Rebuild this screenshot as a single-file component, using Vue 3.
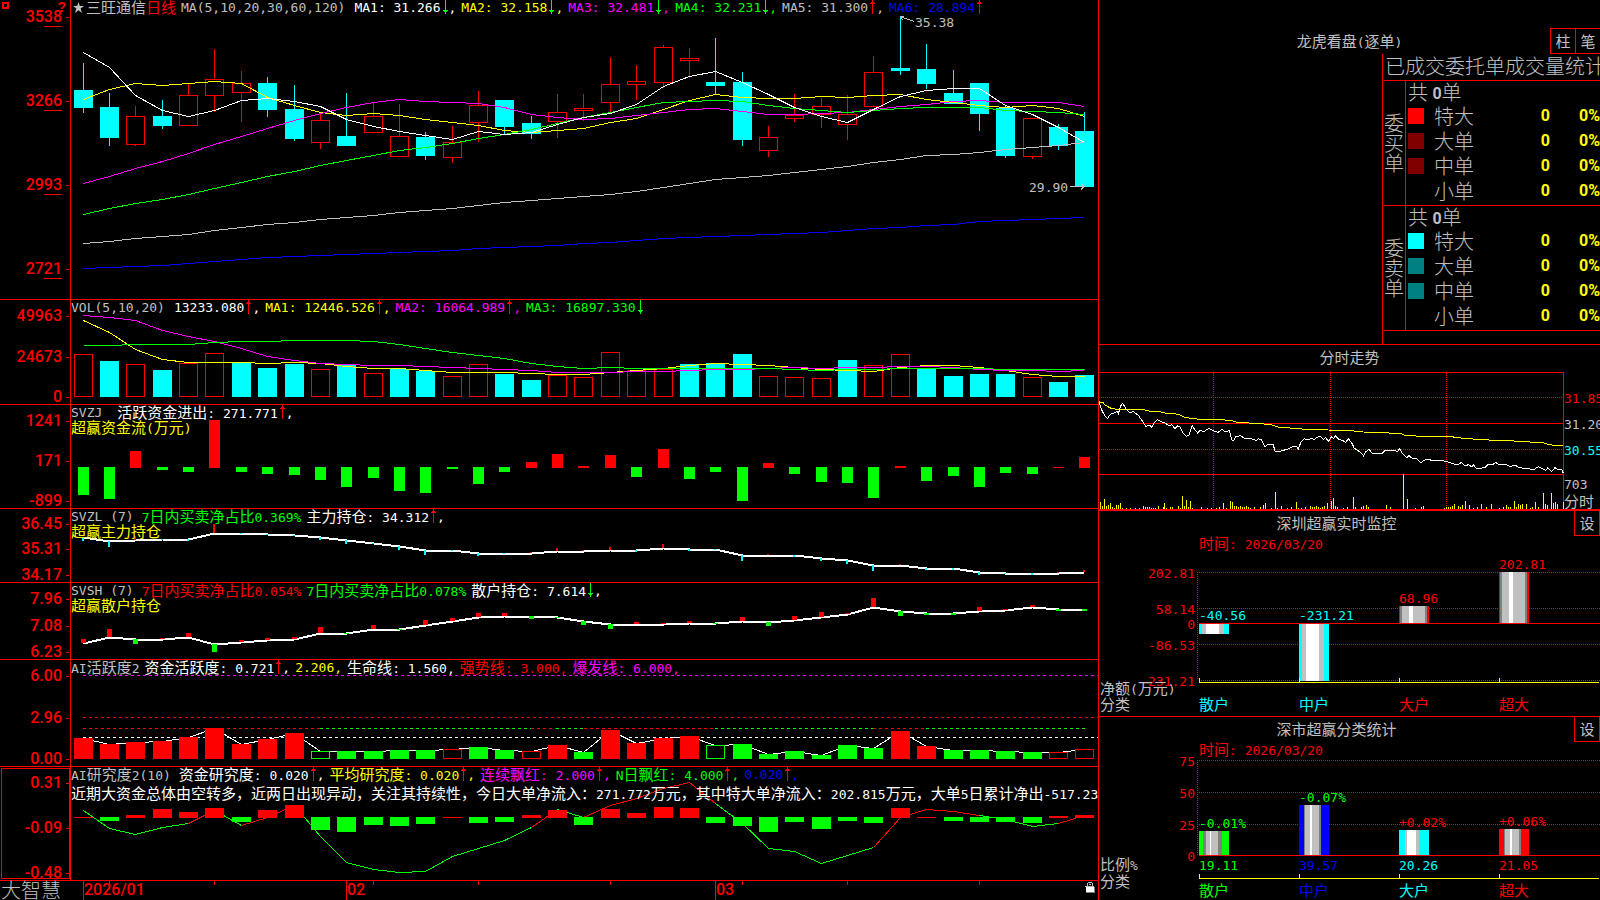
<script setup>
import { h } from 'vue'

const RED = '#ff0000'
const GREEN = '#00ff00'
const CYAN = '#00ffff'
const YELLOW = '#ffff00'
const MAGENTA = '#ff00ff'
const BLUE = '#0000ff'
const WHITE = '#ffffff'
const GRAY = '#c0c0c0'
const DIM = '#808080'

// Chinese runs are set one size larger than the monospaced Latin runs.
const Mixed = (props) =>
  props.t
    .split(/([\u3000-\u9fff\uff00-\uffef]+)/)
    .filter((s) => s)
    .map((s) => h('span', { class: /[\u3000-\u9fff\uff00-\uffef]/.test(s) ? 'han' : 'lat' }, s))
Mixed.props = ['t']

const cx = (i) => Math.floor(83.15 + 26.36 * i)
const line = (ys, from = 0) => ys.map((y, k) => `${cx(from + k) + 0.5},${y + 0.5}`).join(' ')
const place = (box, x, y) => ({
  left: `${((x - box[0]) / box[2]) * 100}%`,
  top: `${((y - box[1]) / box[3]) * 100}%`,
})
const placeRight = (box, x, y) => ({
  right: `${((box[0] + box[2] - x) / box[2]) * 100}%`,
  top: `${((y - box[1]) / box[3]) * 100}%`,
})

// [type, high, body top, body bottom, low]
const candles = [
  ['c', 63, 90, 108, 113], ['c', 93, 107, 138, 146], ['r', 106, 116, 144, 146], ['c', 100, 116, 126, 129],
  ['r', 83, 95, 125, 125], ['r', 49, 79, 95, 112], ['r', 71, 83, 92, 122], ['c', 77, 83, 110, 117],
  ['c', 85, 109, 139, 141], ['r', 112, 120, 142, 149], ['c', 93, 136, 146, 146], ['r', 103, 116, 132, 132],
  ['r', 104, 136, 156, 156], ['c', 132, 137, 156, 160], ['r', 126, 142, 157, 163], ['r', 91, 105, 122, 142],
  ['c', 100, 100, 127, 134], ['c', 116, 123, 134, 139], ['r', 94, 112, 121, 138], ['r', 94, 108, 110, 121],
  ['r', 57, 84, 102, 113], ['r', 65, 81, 84, 100], ['r', 45, 47, 82, 88], ['r', 48, 58, 60, 78],
  ['c', 38, 82, 86, 94], ['c', 72, 82, 140, 146], ['r', 126, 137, 150, 157], ['r', 94, 115, 118, 122],
  ['r', 98, 106, 114, 128], ['r', 95, 114, 124, 140], ['r', 56, 72, 106, 107], ['c', 16, 68, 71, 75],
  ['c', 44, 69, 84, 89], ['c', 70, 93, 104, 104], ['c', 83, 83, 114, 131], ['c', 105, 108, 156, 158],
  ['r', 118, 118, 156, 159], ['c', 124, 127, 146, 150], ['c', 112, 131, 187, 187],
].map(([t, hi, top, bot, lo], i) => ({ t, hi, top, bot, lo, x: cx(i) }))

const maLines = [
  [BLUE, [268, 267, 266, 265, 263, 261, 259, 257, 256, 255, 254, 253, 252, 251, 250, 248, 247, 246, 245, 243, 242, 240, 238, 237, 236, 235, 234, 233, 232, 230, 228, 227, 225, 224, 221, 220, 219, 218, 217]],
  [GRAY, [243, 241, 238, 236, 234, 230, 227, 224, 222, 219, 217, 215, 212, 210, 208, 205, 202, 200, 198, 196, 194, 191, 187, 183, 179, 177, 175, 172, 169, 166, 162, 159, 155, 154, 152, 149, 147, 145, 142]],
  [YELLOW, [99, 89, 83, 85, 83, 81, 83, 97, 105, 112, 115, 113, 115, 119, 122, 125, 130, 132, 130, 128, 122, 118, 109, 100, 94, 97, 98, 98, 96, 97, 95, 94, 99, 102, 105, 107, 105, 108, 116]],
  [MAGENTA, [183, 176, 168, 161, 153, 144, 136, 128, 120, 113, 107, 102, 99, 101, 102, 103, 107, 114, 117, 119, 118, 115, 112, 109, 108, 111, 114, 114, 113, 112, 109, 106, 104, 101, 100, 102, 102, 102, 106]],
  [GREEN, [214, 208, 203, 199, 194, 188, 182, 176, 171, 165, 160, 155, 150, 147, 143, 138, 134, 129, 123, 117, 112, 107, 102, 101, 100, 101, 105, 108, 110, 112, 110, 108, 107, 107, 107, 110, 111, 112, 114]],
  [WHITE, [52, 67, 95, 110, 116, 110, 100, 98, 101, 106, 119, 126, 131, 135, 139, 131, 134, 132, 124, 117, 113, 104, 86, 76, 71, 82, 94, 107, 116, 122, 109, 96, 90, 88, 88, 105, 114, 127, 142]],
]

const volKinds = 'rcrcrrccc' + 'rcrccrrccrrrrrcccrrrcrrccccrcc'
const volTops = [354, 361, 364, 370, 363, 353, 363, 368, 364, 369, 365, 373, 369, 371, 376, 364, 374, 380, 375, 377, 352, 370, 369, 364, 363, 354, 376, 377, 378, 360, 365, 354, 369, 376, 374, 374, 377, 382, 375]
const volLines = [
  [YELLOW, [320, 332, 349, 359, 362, 362, 362, 363, 362, 363, 366, 368, 368, 370, 372, 372, 372, 373, 374, 374, 372, 370, 368, 365, 363, 364, 365, 367, 369, 370, 371, 367, 365, 365, 367, 370, 374, 376, 376]],
  [MAGENTA, [315, 317, 320, 330, 336, 341, 348, 356, 360, 363, 364, 365, 365, 366, 367, 368, 369, 370, 372, 372, 372, 371, 371, 370, 369, 369, 368, 367, 368, 367, 367, 366, 366, 367, 369, 370, 370, 371, 370]],
  [GREEN, [345, 345, 344, 344, 344, 342, 341, 341, 340, 340, 340, 341, 344, 348, 352, 355, 358, 363, 366, 368, 367, 368, 368, 368, 368, 368, 368, 369, 370, 369, 369, 368, 368, 368, 368, 369, 369, 369, 369]],
]

// End of each bar; values above the zero line are inflows.
const flow = [495, 499, 451, 470, 472, 420, 472, 474, 475, 480, 487, 478, 491, 493, 469, 484, 472, 462, 454, 466, 455, 477, 449, 479, 472, 501, 463, 474, 482, 483, 498, 466, 481, 476, 487, 473, 474, 467, 457]

const main7 = [537, 541, 540, 539, 539, 533, 533, 534, 535, 537, 540, 543, 546, 550, 550, 553, 553, 553, 551, 551, 550, 550, 548, 549, 549, 555, 555, 555, 558, 560, 565, 565, 568, 568, 572, 573, 573, 573, 572]
const mainMarks = [4, 6, -4, 1, 2, -9, 1, 1, 1, 3, 4, 1, 4, 5, 1, 3, 1, -1, -3, -1, -3, 2, -4, 2, 1, 6, -1, 2, 3, 4, 6, -1, 2, 2, 3, 1, 2, -1, -2]
const retail = [643, 637, 639, 639, 637, 644, 642, 640, 639, 633, 633, 629, 629, 625, 621, 617, 616, 616, 617, 621, 624, 624, 624, 623, 623, 621, 622, 620, 617, 614, 607, 611, 613, 613, 611, 610, 607, 609, 609]
const retailMarks = [-4, -8, 5, -1, -4, 8, -2, -2, -2, -6, 1, -4, 1, -5, -3, -4, -3, 3, 1, 4, 5, -2, -1, -2, 1, -4, 4, -4, -5, -1, -9, 5, 2, 2, -4, -1, -2, 2, 2]

// Upper case is a filled bar, lower case an outlined one.
const activeKinds = 'RRRRRRRRRgGGGGrGGrRGRRRRgGGGGGGRRGGGGrr'.split('')
const active = [738, 744, 742, 741, 737, 728, 744, 739, 733, 751, 751, 751, 750, 750, 749, 747, 750, 751, 745, 752, 730, 743, 738, 736, 745, 744, 754, 751, 755, 745, 748, 731, 746, 750, 750, 751, 752, 752, 749]
const paceLine = [
  [RED, 83, 320], [GREEN, 320, 531], [RED, 531, 556], [GREEN, 556, 584],
  [RED, 584, 715], [GREEN, 715, 873], [RED, 873, 926], [GREEN, 926, 1085],
]

const study = [817, 821, 815, 809, 812, 808, 822, 810, 805, 830, 832, 825, 826, 824, 817, 823, 822, 815, 810, 825, 809, 813, 807, 808, 823, 826, 832, 822, 829, 821, 823, 808, 817, 821, 822, 822, 823, 816, 815]
const studyKinds = 'rgrrrrgrrgggggrggrrgrrrrgggggggrrggggrr'.split('')
const studyY = [810, 828, 834, 827, 823, 810, 825, 817, 805, 836, 862, 869, 872, 871, 856, 848, 840, 827, 809, 817, 805, 798, 788, 782, 803, 823, 848, 851, 863, 855, 847, 817, 809, 811, 815, 819, 826, 823, 815]
const studyRuns = [
  [GREEN, 0, 4], [RED, 4, 5], [GREEN, 5, 6], [RED, 6, 8], [GREEN, 8, 17], [RED, 17, 18],
  [GREEN, 18, 19], [RED, 19, 24], [GREEN, 24, 30], [RED, 30, 34], [GREEN, 34, 37], [RED, 37, 38],
].map(([c, a, b]) => ({ c, p: line(studyY.slice(a, b + 1), a) }))

const panels = [
  {
    id: 'ma', y: 0, h: 299, unit: true,
    ticks: [['3538', 16], ['3266', 100], ['2993', 184], ['2721', 268]],
    segs: [
      { t: 'MA(5,10,20,30,60,120)', c: GRAY, gap: 4 },
      { t: 'MA1: 31.266', c: WHITE, a: -1 }, { t: 'MA2: 32.158', c: YELLOW, a: -1 },
      { t: 'MA3: 32.481', c: MAGENTA, a: -1 }, { t: 'MA4: 32.231', c: GREEN, a: -1 },
      { t: 'MA5: 31.300', c: GRAY, a: 1 }, { t: 'MA6: 28.894', c: BLUE, a: 1, last: true },
    ],
  },
  {
    id: 'vol', y: 300, h: 104, ticks: [['49963', 315], ['24673', 356], ['0', 396]],
    segs: [
      { t: 'VOL(5,10,20)', c: GRAY, gap: 4 }, { t: '13233.080', c: WHITE, a: 1 },
      { t: 'MA1: 12446.526', c: YELLOW, a: 1 }, { t: 'MA2: 16064.989', c: MAGENTA, a: 1 },
      { t: 'MA3: 16897.330', c: GREEN, a: -1, last: true },
    ],
  },
  {
    id: 'flow', y: 405, h: 103, ticks: [['1241', 420], ['171', 460], ['-899', 500]], note: '超赢资金流(万元)',
    segs: [{ t: 'SVZJ', c: GRAY, gap: 10 }, { t: '活跃资金进出: 271.771', c: WHITE, a: 1 }],
  },
  {
    id: 'main', y: 509, h: 73, ticks: [['36.45', 524], ['35.31', 549], ['34.17', 574]], note: '超赢主力持仓',
    segs: [
      { t: 'SVZL (7)', c: GRAY, gap: 3 }, { t: '7日内买卖净占比0.369%', c: GREEN },
      { t: '主力持仓: 34.312', c: WHITE, a: 1 },
    ],
  },
  {
    id: 'retail', y: 583, h: 76, ticks: [['7.96', 598], ['7.08', 625], ['6.23', 651]], note: '超赢散户持仓',
    segs: [
      { t: 'SVSH (7)', c: GRAY, gap: 3 }, { t: '7日内买卖净占比0.054%', c: RED },
      { t: '7日内买卖净占比0.078%', c: GREEN }, { t: '散户持仓: 7.614', c: WHITE, a: -1 },
    ],
  },
  {
    id: 'active', y: 660, h: 106, ticks: [['6.00', 675], ['2.96', 717], ['0.00', 758]],
    segs: [
      { t: 'AI活跃度2', c: GRAY }, { t: '资金活跃度: 0.721', c: WHITE, a: 1 }, { t: '2.206,', c: YELLOW },
      { t: '生命线: 1.560,', c: WHITE }, { t: '强势线: 3.000,', c: RED }, { t: '爆发线: 6.000,', c: MAGENTA },
    ],
  },
  {
    id: 'study', y: 767, h: 113, ticks: [['0.31', 782], ['-0.09', 827], ['-0.48', 872]],
    body: '近期大资金总体由空转多，近两日出现异动，关注其持续性，今日大单净流入：271.772万元，其中特大单净流入：202.815万元，大单5日累计净出-517.236万元',
    segs: [
      { t: 'AI研究度2(10)', c: GRAY, gap: 3 }, { t: '资金研究度: 0.020', c: WHITE, a: 1 },
      { t: '平均研究度: 0.020', c: YELLOW, a: 1 }, { t: '连续飘红: 2.000', c: MAGENTA, a: 1 },
      { t: 'N日飘红: 4.000', c: GREEN, a: 1 }, { t: '0.020', c: BLUE, a: 1 },
    ],
  },
]
const pct = (v, p) => ({ top: `${((v + 0.5 - p.y) / p.h) * 100}%` })
const maBox = [71, 0, 1027, 299]

const dates = [
  { x: 83, label: '2026/01' }, { x: 109 }, { x: 214 }, { x: 346, label: '02' }, { x: 373 }, { x: 478 },
  { x: 610 }, { x: 715, label: '03' }, { x: 742 }, { x: 847 }, { x: 979 },
]

const sides = [
  { name: '委买单', rows: [['特大', RED], ['大单', '#800000'], ['中单', '#800000'], ['小单', '']] },
  { name: '委卖单', rows: [['特大', CYAN], ['大单', '#008080'], ['中单', '#008080'], ['小单', '']] },
]

// Intraday traces are sampled on a grid of thirds of a pixel.
const trace = (s) =>
  s.split(' ').map((p) => {
    const [x, y] = p.split(',').map(Number)
    return `${1095 + x / 3},${340 + y / 3}`
  }).join(' ')
const avgTrace = trace('12,185 24,188 30,195 48,205 66,208 144,209 162,213 195,215 210,219 252,223 264,230 285,235 318,238 380,239 410,242 425,247 500,251 530,255 548,261 620,267 700,270 768,272 805,276 870,278 920,282 928,286 980,289 1068,290 1105,295 1147,298 1200,301 1255,302 1260,304 1305,306 1343,308 1360,313 1376,316 1405,317')
const priceTrace = trace('12,185 17,202 22,214 30,228 38,235 46,223 56,220 66,214 70,222 76,200 82,190 90,200 94,209 106,219 114,214 130,226 140,240 152,259 164,255 170,261 178,248 188,239 200,246 212,250 222,258 230,254 240,266 248,257 256,262 262,276 274,289 282,285 292,257 300,270 308,279 316,270 326,275 342,265 352,271 370,277 380,268 392,276 403,272 410,300 416,303 422,290 436,287 450,296 470,297 484,301 490,296 500,300 510,321 520,312 534,313 541,335 556,334 578,327 594,320 604,319 610,327 618,306 628,296 640,300 650,295 658,299 664,292 676,289 686,298 692,292 700,305 710,290 716,296 722,287 730,297 744,302 752,308 760,296 770,308 778,325 794,335 806,348 812,336 822,328 832,340 862,340 870,331 900,331 908,335 914,326 920,338 936,353 942,346 950,354 966,357 978,368 986,361 1000,358 1010,361 1044,362 1060,366 1072,371 1088,375 1100,367 1110,378 1120,374 1130,380 1136,374 1144,386 1160,384 1170,382 1180,372 1192,375 1202,367 1210,373 1230,373 1245,379 1262,376 1270,382 1290,386 1318,388 1330,380 1345,387 1352,391 1358,384 1370,394 1380,383 1388,389 1400,388 1405,400')
const ticksVol = '16,486 22,498 28,477 34,498 40,495 46,489 52,501 58,504 64,495 70,495 76,489 82,504 94,504 106,504 121,504 133,504 145,498 151,501 157,501 163,501 169,504 175,504 181,504 190,498 205,501 208,489 214,504 226,501 232,501 250,498 256,504 262,468 268,500 274,480 280,501 286,483 292,504 319,501 337,504 349,504 364,504 373,501 385,489 394,504 406,483 412,486 418,498 424,498 430,501 436,498 442,501 448,501 454,498 460,501 466,504 478,501 496,501 505,495 511,489 529,504 541,456 547,504 559,498 577,504 589,501 604,486 610,504 620,504 632,503 646,498 652,501 658,501 664,498 670,501 676,504 682,501 688,498 697,489 709,483 715,474 721,498 727,501 745,504 757,501 775,471 781,501 799,501 805,498 814,495 820,501 874,495 886,501 925,403 937,477 961,504 979,501 985,498 1048,504 1054,501 1060,501 1066,501 1072,498 1078,492 1090,498 1096,501 1102,495 1111,483 1123,495 1135,504 1147,501 1159,492 1174,501 1189,492 1213,504 1225,501 1234,495 1240,501 1246,501 1258,483 1264,501 1270,492 1276,495 1282,492 1294,492 1306,504 1312,501 1321,486 1330,501 1345,459 1351,492 1357,495 1369,459 1375,489 1381,486 1387,492 1405,486'
  .split(' ').map((p) => {
    const [x, y] = p.split(',').map(Number)
    return { x: Math.floor(1095 + x / 3), h: Math.round((508 - y) / 3) }
  })
const quotes = [
  ['31.85', RED, 398], ['31.20', GRAY, 424], ['30.55', CYAN, 450], ['703', GRAY, 484], ['分时', GRAY, 501],
]
const tickBox = [1099, 345, 501, 164]

const coldStripe = [[CYAN, 3], [GRAY, 4], [WHITE, 13], [GRAY, 5], [CYAN, 5]]
const hotStripe = [[RED, 1], [DIM, 2], [GRAY, 7], [WHITE, 4], [GRAY, 12], [DIM, 2], [RED, 2]]
const stripes = (b) => {
  let x = b.x
  return b.s.map(([c, w]) => {
    const r = { c, x, w }
    x += w
    return r
  })
}
const wide = (c) => [[c, 5], [DIM, 1], [GRAY, 5], [WHITE, 2], [GRAY, 7], [DIM, 2], [c, 8]]

const stats = [
  {
    title: '深圳超赢实时监控', box: [1099, 511, 501, 205], dateY: 543, unit: '净额(万元)', unitY: 688, catHeadY: 704,
    dots: [572, 608, 644, 680], zero: 623, v: [572, 680], base: 682, tick: 678, catY: 704,
    axis: [['202.81', 573], ['58.14', 609], ['0', 624], ['-86.53', 645], ['-231.21', 681]],
    bars: [
      { x: 1199, y: 624, h: 10, s: coldStripe, name: '散户', c: CYAN },
      { x: 1299, y: 624, h: 57, s: coldStripe, name: '中户', c: CYAN },
      { x: 1399, y: 606, h: 17, s: hotStripe, name: '大户', c: RED },
      { x: 1499, y: 572, h: 51, s: hotStripe, name: '超大', c: RED },
    ],
    marks: [
      ['-40.56', CYAN, 1199, 615], ['-231.21', CYAN, 1299, 615], ['68.96', RED, 1399, 598], ['202.81', RED, 1499, 564],
    ],
  },
  {
    title: '深市超赢分类统计', box: [1099, 717, 501, 183], dateY: 749, unit: '比例%', unitY: 864, catHeadY: 881,
    dots: [760, 792, 824], zero: 855, v: [760, 855], base: 878, tick: 874, catY: 890,
    axis: [['75', 761], ['50', 793], ['25', 825], ['0', 856]],
    bars: [
      { x: 1199, y: 831, h: 24, s: [[GREEN, 4], [DIM, 3], [GRAY, 4], [WHITE, 1], [GRAY, 7], [DIM, 4], [GREEN, 7]], name: '散户', c: GREEN },
      { x: 1299, y: 805, h: 50, s: wide(BLUE), name: '中户', c: BLUE },
      { x: 1399, y: 830, h: 25, s: [[CYAN, 6], [GRAY, 2], [WHITE, 9], [GRAY, 3], [CYAN, 10]], name: '大户', c: CYAN },
      { x: 1499, y: 829, h: 26, s: wide(RED), name: '超大', c: RED },
    ],
    marks: [
      ['-0.01%', GREEN, 1199, 823], ['-0.07%', GREEN, 1299, 797], ['+0.02%', RED, 1399, 822], ['+0.06%', RED, 1499, 821],
      ['19.11', GREEN, 1199, 865], ['39.57', BLUE, 1299, 865], ['20.26', CYAN, 1399, 865], ['21.05', RED, 1499, 865],
    ],
  },
]
</script>

<template>
  <main class="terminal">
    <section class="charts">
      <article v-for="p in panels" :key="p.id" class="panel" :class="'panel-' + p.id">
        <div class="axis">
          <template v-if="p.unit">
            <svg class="pin" viewBox="0 0 8 8" shape-rendering="crispEdges" aria-hidden="true">
              <path d="M1 1h5v5h-5z" fill="none" stroke="#ff0000" stroke-width="2" />
              <path d="M6 6h1v1h-1z" fill="#ff0000" />
            </svg>
            <span class="help">?</span>
          </template>
          <span v-for="t in p.ticks" :key="t[0]" class="tick" :style="pct(t[1], p)">
            <template v-if="p.unit">{{ t[0].slice(0, 2) }}<span class="cents">{{ t[0].slice(2) }}</span></template>
            <template v-else>{{ t[0] }}</template>
          </span>
        </div>
        <div class="plot">
          <svg class="canvas" :viewBox="`71 ${p.y} 1027 ${p.h}`" preserveAspectRatio="none" shape-rendering="crispEdges">
            <template v-if="p.id === 'ma'">
              <g v-for="c in candles" :key="c.x">
                <template v-if="c.t === 'c'">
                  <rect :x="c.x" :y="c.hi" width="1" :height="c.lo - c.hi" fill="#00ffff" />
                  <rect :x="c.x - 9" :y="c.top" width="19" :height="c.bot - c.top" fill="#00ffff" />
                </template>
                <path
                  v-else fill="none" stroke="#ff0000"
                  :d="`M${c.x - 8.5} ${c.top + 0.5}h18V${c.bot + 0.5}h-18zM${c.x + 0.5} ${c.hi}V${c.top}M${c.x + 0.5} ${c.bot}V${c.lo}`"
                />
              </g>
              <polyline v-for="l in maLines" :key="l[0]" :points="line(l[1])" :stroke="l[0]" fill="none" />
              <path d="M900 16.5l14 5M900 16.5h4M900.500 16l2 4M1070 186.500h14M1081 183.500l3 3l-3 3" fill="none" stroke="#c0c0c0" />
            </template>
            <template v-if="p.id === 'vol'">
              <template v-for="(y, i) in volTops" :key="i">
                <rect v-if="volKinds[i] === 'c'" :x="cx(i) - 9" :y="y" width="19" :height="397 - y" fill="#00ffff" />
                <rect v-else :x="cx(i) - 8.5" :y="y + 0.5" width="18" :height="396 - y" fill="none" stroke="#ff0000" />
              </template>
              <polyline v-for="l in volLines" :key="l[0]" :points="line(l[1])" :stroke="l[0]" fill="none" />
            </template>
            <template v-if="p.id === 'flow'">
              <rect
                v-for="(y, i) in flow" :key="i" :x="cx(i) - 5" width="11" :y="Math.min(y, 467)"
                :height="y <= 467 ? 468 - y : y - 467" :fill="y <= 467 ? RED : GREEN"
              />
            </template>
            <template v-if="p.id === 'main'">
              <polyline :points="line(main7)" stroke="#ffffff" stroke-width="2" fill="none" />
              <rect
                v-for="(m, i) in mainMarks" :key="i" :x="cx(i) - 1" width="2" :y="m < 0 ? main7[i] + m : main7[i]"
                :height="Math.abs(m)" :fill="m < 0 ? RED : CYAN"
              />
            </template>
            <template v-if="p.id === 'retail'">
              <polyline :points="line(retail)" stroke="#ffffff" stroke-width="2" fill="none" />
              <rect
                v-for="(m, i) in retailMarks" :key="i" :x="cx(i) - 2" width="5" :y="m < 0 ? retail[i] + m : retail[i]"
                :height="Math.abs(m)" :fill="m < 0 ? RED : GREEN"
              />
            </template>
            <template v-if="p.id === 'active'">
              <g stroke-dasharray="3 3">
                <path d="M83 675.500H1098" stroke="#ff00ff" />
                <path d="M83 717.500H1098" stroke="#ff0000" />
                <path v-for="s in paceLine" :key="s[1]" :d="`M${s[1]} 728.5H${s[2]}`" :stroke="s[0]" />
                <path d="M83 737.500H1098" stroke="#ffffff" />
              </g>
              <polyline :points="line(active)" stroke="#ffffff" fill="none" />
              <template v-for="(y, i) in active" :key="i">
                <rect
                  v-if="/[RG]/.test(activeKinds[i])" :x="cx(i) - 9" :y="y" width="19" :height="759 - y"
                  :fill="activeKinds[i] === 'R' ? RED : GREEN"
                />
                <rect
                  v-else :x="cx(i) - 8.5" :y="y + 0.5" width="18" :height="758 - y" fill="#000000"
                  :stroke="activeKinds[i] === 'r' ? RED : GREEN"
                />
              </template>
            </template>
            <template v-if="p.id === 'study'">
              <polyline v-for="(s, i) in studyRuns" :key="i" :points="s.p" :stroke="s.c" fill="none" />
              <rect
                v-for="(y, i) in study" :key="'b' + i" :x="cx(i) - 9" width="19"
                :y="studyKinds[i] === 'r' ? y : 817" :height="studyKinds[i] === 'r' ? 818 - y : y - 817"
                :fill="studyKinds[i] === 'r' ? RED : GREEN"
              />
            </template>
          </svg>
          <div class="caption">
            <div class="legend">
              <template v-if="p.unit">
                <svg class="star" viewBox="0 0 11 11" aria-hidden="true">
                  <path d="M5.500 0l1.300 4H11L7.600 6.500L9 11L5.500 8.200L2 11L3.400 6.500L0 4h4.200z" fill="#c0c0c0" />
                </svg>
                <span class="stock"><Mixed t="三旺通信" /><span class="period"><Mixed t="日线" /></span></span>
              </template>
              <span v-for="(s, i) in p.segs" :key="i" class="seg" :style="{ color: s.c, marginRight: (s.gap || 0) + 'px' }">
                <span><Mixed :t="s.t" /></span>
                <svg v-if="s.a" class="arrow" viewBox="0 0 8 14" shape-rendering="crispEdges" aria-hidden="true">
                  <path v-if="s.a > 0" d="M4 0h1v14h-1zM3 2h3v1h-3zM2 3h5v1h-5z" fill="#ff0000" />
                  <path v-else d="M4 0h1v14h-1zM3 11h3v1h-3zM2 10h5v1h-5z" fill="#00ff00" />
                </svg>
                <span v-if="s.a && !s.last">,</span>
              </span>
            </div>
            <div v-if="p.note" class="note"><Mixed :t="p.note" /></div>
            <div v-if="p.body" class="report"><Mixed :t="p.body" /></div>
          </div>
          <template v-if="p.unit">
            <span class="tag" :style="place(maBox, 915, 22)"><Mixed t="35.38" /></span>
            <span class="tag" :style="place(maBox, 1029, 187)"><Mixed t="29.90" /></span>
          </template>
        </div>
      </article>
      <footer class="timeline">
        <div class="brand">大智慧</div>
        <div class="dates">
          <span
            v-for="d in dates" :key="d.x" class="date" :class="{ long: d.label }"
            :style="{ left: ((d.x - 71) / 1027) * 100 + '%' }"
          >{{ d.label }}</span>
          <svg class="lock" viewBox="0 0 11 12" shape-rendering="crispEdges" aria-hidden="true">
            <path d="M3 0h4v1h-4zM2 1h1v3h-1zM7 1h1v3h-1zM4 2h2v1h-2zM0 4h9v1h-9z" fill="#c0c0c0" />
            <path d="M1 5h8v5h-8z" fill="#ffffff" />
            <path d="M9 5h1v6h-9v-1h8z" fill="#808080" />
          </svg>
        </div>
      </footer>
    </section>

    <aside class="side">
      <section class="orders">
        <header class="orders-head">
          <h2><Mixed t="龙虎看盘(逐单)" /></h2>
          <div class="modes"><button type="button">柱</button><button type="button">笔</button></div>
        </header>
        <div class="ledger">
          <h3>已成交委托单成交量统计</h3>
          <div v-for="s in sides" :key="s.name" class="book">
            <div class="book-name">{{ s.name }}</div>
            <table>
              <colgroup>
                <col class="col-swatch" />
                <col class="col-name" />
                <col class="col-count" />
                <col />
              </colgroup>
              <thead>
                <tr><th colspan="4" scope="colgroup">共 <b>0</b>单</th></tr>
              </thead>
              <tbody>
                <tr v-for="r in s.rows" :key="r[0]">
                  <td><i v-if="r[1]" class="swatch" :style="{ background: r[1] }"></i></td>
                  <th scope="row">{{ r[0] }}</th>
                  <td class="num">0</td>
                  <td class="num">0%</td>
                </tr>
              </tbody>
            </table>
          </div>
        </div>
      </section>

      <section class="intraday">
        <h2><Mixed t="分时走势" /></h2>
        <svg class="canvas" viewBox="1099 345 501 164" preserveAspectRatio="none" shape-rendering="crispEdges">
          <g fill="none" stroke="#ff0000">
            <path d="M1099 372.500H1563.500V509M1099 423.500H1563M1099 474.500H1563" />
            <path
              stroke-dasharray="1 1"
              d="M1099 397.500H1563M1099 449.500H1563M1213.500 373V509M1330.500 373V509M1446.500 373V509"
            />
          </g>
          <polyline :points="avgTrace" fill="none" stroke="#ffff00" />
          <polyline :points="priceTrace" fill="none" stroke="#ffffff" />
          <rect v-for="t in ticksVol" :key="t.x" :x="t.x" :y="509 - t.h" width="1" :height="t.h" fill="#ffff00" />
        </svg>
        <span v-for="q in quotes" :key="q[0]" class="tag" :style="{ ...place(tickBox, 1564, q[2]), color: q[1] }"><Mixed :t="q[0]" /></span>
      </section>

      <section v-for="s in stats" :key="s.title" class="stat">
        <header>
          <h2><Mixed :t="s.title" /></h2>
          <button type="button">设</button>
        </header>
        <svg class="canvas" :viewBox="s.box.join(' ')" preserveAspectRatio="none" shape-rendering="crispEdges">
          <g fill="none" stroke="#ff0000" stroke-dasharray="1 1">
            <path v-for="y in s.dots" :key="y" :d="`M1199 ${y + 0.5}H1600`" />
            <path :d="`M1197.5 ${s.v[0]}V${s.v[1]}`" />
          </g>
          <path :d="`M1199 ${s.zero + 0.5}H1600`" stroke="#ff0000" />
          <g v-for="b in s.bars" :key="b.x">
            <rect v-for="r in stripes(b)" :key="r.x" :x="r.x" :y="b.y" :width="r.w" :height="b.h" :fill="r.c" />
            <rect :x="b.x" :y="s.tick" width="1" height="4" fill="#ffff00" />
          </g>
          <path :d="`M1199 ${s.base + 0.5}H1599`" stroke="#ffff00" />
        </svg>
        <span class="tag red" :style="place(s.box, 1199, s.dateY)"><Mixed t="时间: 2026/03/20" /></span>
        <span v-for="a in s.axis" :key="a[0]" class="tag red" :style="placeRight(s.box, 1195, a[1])"><Mixed :t="a[0]" /></span>
        <span v-for="m in s.marks" :key="m[0]" class="tag" :style="{ ...place(s.box, m[2], m[3]), color: m[1] }"><Mixed :t="m[0]" /></span>
        <span v-for="b in s.bars" :key="b.name" class="tag" :style="{ ...place(s.box, b.x, s.catY), color: b.c }"><Mixed :t="b.name" /></span>
        <span class="tag" :style="place(s.box, 1100, s.unitY)"><Mixed :t="s.unit" /></span>
        <span class="tag" :style="place(s.box, 1100, s.catHeadY)"><Mixed t="分类" /></span>
      </section>
    </aside>
  </main>
</template>

<style>
html,
body {
  background: #000;
}
.han {
  font-family: "Noto Sans CJK SC", sans-serif;
  font-size: 15px;
  font-weight: 400;
}
.lat {
  font-family: "DejaVu Sans Mono", monospace;
  font-size: 13px;
}
</style>

<style scoped>
.terminal {
  display: grid;
  grid-template-columns: minmax(0, 1099fr) minmax(0, 501fr);
  min-height: 100vh;
  overflow: hidden;
  background: #000;
  color: #c0c0c0;
  font-family: "DejaVu Sans Mono", "Noto Sans CJK SC", monospace;
  font-size: 13px;
  line-height: 15px;
}
h2,
h3 {
  margin: 0;
  font-size: 13px;
  font-weight: 400;
}
button {
  width: 26px;
  height: 26px;
  padding: 0;
  border: 1px solid #f00;
  background: #000;
  color: #c0c0c0;
  font: 15px/20px "Noto Sans CJK SC", sans-serif;
}
.charts {
  display: grid;
  grid-template-rows: 300fr 105fr 104fr 74fr 77fr 107fr 114fr 19fr;
  border-right: 1px solid #f00;
  min-width: 0;
}
.panel {
  display: grid;
  grid-template-columns: 71px minmax(0, 1fr);
  min-height: 0;
  border-bottom: 1px solid #f00;
}
.axis {
  position: relative;
  border-right: 1px solid #f00;
  color: #f00;
  font: 500 16px/16px Roboto, sans-serif;
}
.panel-study .axis {
  outline: 1px solid #f00;
  outline-offset: -2px;
}
.tick {
  position: absolute;
  right: 8px;
  transform: translateY(-50%);
}
.tick::after {
  content: "";
  position: absolute;
  top: 50%;
  right: -7px;
  width: 3px;
  height: 1px;
  background: #f00;
}
.cents {
  border-bottom: 1px solid #f00;
}
.pin {
  position: absolute;
  top: 2px;
  left: 2px;
  width: 8px;
  height: 8px;
}
.help {
  position: absolute;
  top: 0;
  right: 4px;
  font: 700 14px/15px "Liberation Sans", sans-serif;
}
.plot {
  position: relative;
  display: grid;
  min-width: 0;
  min-height: 0;
  overflow: hidden;
}
.canvas {
  position: absolute;
  inset: 0;
  width: 100%;
  height: 100%;
}
.caption {
  position: relative;
  min-width: 0;
  white-space: pre;
}
.legend {
  display: flex;
  align-items: center;
  gap: 5px;
  height: 14px;
}
.seg {
  display: flex;
  align-items: center;
}
.arrow {
  flex: none;
  width: 8px;
  height: 14px;
}
.star {
  flex: none;
  width: 11px;
  height: 11px;
  margin: 0 -3px 0 2px;
}
.period {
  color: #f00;
}
.note {
  color: #ff0;
}
.report {
  padding-top: 4px;
  color: #fff;
}
.tag {
  position: absolute;
  transform: translateY(-50%);
  white-space: pre;
}
.red {
  color: #f00;
}
.timeline {
  display: grid;
  grid-template-columns: 71px minmax(0, 1fr);
}
.brand {
  padding-left: 1px;
  font: 300 20px/17px "Noto Sans CJK SC", sans-serif;
}
.dates {
  position: relative;
  color: #f00;
  font: 500 16px/18px Roboto, sans-serif;
}
.date {
  position: absolute;
  top: 0;
  height: 4px;
  border-left: 1px solid #f00;
}
.date.long {
  height: 100%;
}
.lock {
  position: absolute;
  top: 1px;
  right: 2px;
  width: 11px;
  height: 12px;
}
.side {
  display: grid;
  grid-template-rows: 345fr 166fr 206fr 183fr;
  min-width: 0;
}
.orders {
  border-bottom: 1px solid #f00;
  overflow: hidden;
}
.orders-head {
  position: relative;
  display: grid;
  place-items: center;
  height: 26px;
  padding-top: 28px;
}
.modes {
  position: absolute;
  right: -1px;
  bottom: 0;
  display: flex;
}
.modes button + button {
  margin-left: -1px;
}
.ledger {
  height: calc(100% - 54px);
  width: 217px;
  margin-left: auto;
  border-left: 1px solid #f00;
  font: 300 20px/25px "Noto Sans CJK SC", sans-serif;
}
.ledger h3 {
  height: 26px;
  padding-left: 2px;
  overflow: hidden;
  font: inherit;
  line-height: 24px;
  white-space: nowrap;
}
.book {
  display: grid;
  grid-template-columns: 22px minmax(0, 1fr);
  margin-left: 1px;
  border-top: 1px solid #f00;
}
.book:last-child {
  border-bottom: 1px solid #f00;
}
.book-name {
  display: flex;
  align-items: center;
  border-right: 1px solid #f00;
  line-height: 20px;
  word-break: break-all;
}
.book table {
  width: 100%;
  border-collapse: collapse;
  table-layout: fixed;
}
.col-swatch {
  width: 28px;
}
.col-name {
  width: 80px;
}
.col-count {
  width: 36px;
}
.book thead tr {
  height: 24px;
}
.book tbody tr {
  height: 25px;
}
.book th,
.book td {
  padding: 0;
  font-weight: 300;
  line-height: 21px;
  text-align: left;
  vertical-align: top;
}
.book thead th {
  padding-left: 2px;
}
.book b {
  font: 700 16px/16px Roboto, sans-serif;
  vertical-align: 1px;
}
.swatch {
  display: block;
  width: 16px;
  height: 16px;
  margin: 3px 0 0 2px;
}
.book .num {
  color: #ff0;
  font: 700 16px/22px Roboto, sans-serif;
  text-align: right;
}
.intraday {
  position: relative;
  border-bottom: 2px solid #f00;
  overflow: hidden;
}
.intraday h2 {
  padding-top: 4px;
  text-align: center;
}
.stat {
  position: relative;
  overflow: hidden;
}
.stat:not(:last-child) {
  border-bottom: 1px solid #f00;
}
.stat header {
  position: relative;
  z-index: 1;
  display: flex;
  align-items: center;
}
.stat h2 {
  flex: 1;
  text-align: center;
}
.stat header button {
  margin-top: -1px;
}
</style>
